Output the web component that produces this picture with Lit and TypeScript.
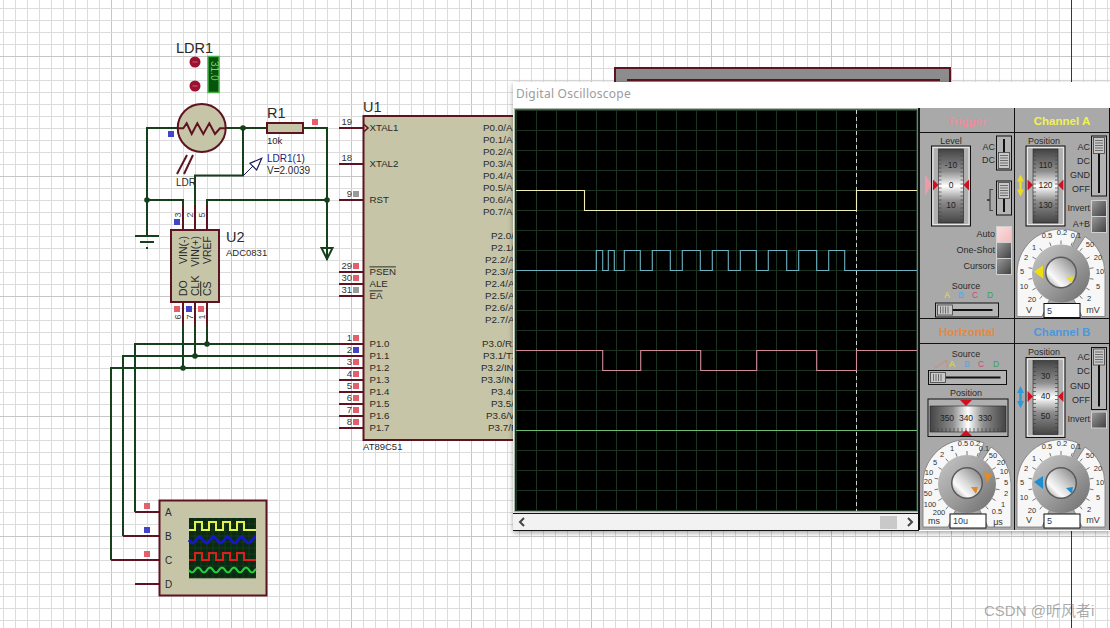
import { LitElement, html, svg, css } from "lit";
import { customElement } from "lit/decorators.js";

const WIRE = "#16401c";
const PIN = "#5e1420";
const BODY = "#c6c5a7";
const RED_SQ = "#e0606c";
const BLUE_SQ = "#4444c8";
const GRAY_SQ = "#9a9a9a";
const INK = "#2a2a2a";

type Anchor = "start" | "middle" | "end";

const t = (x: number, y: number, s: string, size = 10, anchor: Anchor = "start", fill = INK) =>
  svg`<text x=${x} y=${y} dy=".35em" font-size=${size} text-anchor=${anchor} fill=${fill}>${s}</text>`;

const rt = (x: number, y: number, s: string, size = 10.5, anchor: Anchor = "start", fill = INK) =>
  svg`<text transform="translate(${x} ${y}) rotate(-90)" dy=".35em" font-size=${size} text-anchor=${anchor} fill=${fill}>${s}</text>`;

const ln = (x1: number, y1: number, x2: number, y2: number, c = WIRE, w = 2) =>
  svg`<line x1=${x1} y1=${y1} x2=${x2} y2=${y2} stroke=${c} stroke-width=${w} />`;

const sq = (x: number, y: number, c = RED_SQ) =>
  svg`<rect x=${x - 3} y=${y - 3} width="6" height="6" fill=${c} />`;

const node = (x: number, y: number) => svg`<circle cx=${x} cy=${y} r="2.8" fill=${WIRE} />`;

function digital(xs: number[], y0: number, y1: number, start: number, end: number) {
  const pts: string[] = [`${start},${y0}`];
  let cur = y0;
  for (const x of xs) {
    pts.push(`${x},${cur}`);
    cur = cur === y0 ? y1 : y0;
    pts.push(`${x},${cur}`);
  }
  pts.push(`${end},${cur}`);
  return pts.join(" ");
}

function sine(x0: number, x1: number, y: number, amp: number, period: number) {
  const p: string[] = [];
  for (let x = x0; x <= x1; x += 1) p.push(`${x},${(y + amp * Math.sin(((x - x0) / period) * 2 * Math.PI)).toFixed(1)}`);
  return p.join(" ");
}

const range = (a: number, b: number, s: number) => {
  const r: number[] = [];
  for (let v = a; v <= b; v += s) r.push(v);
  return r;
};

/* ---------- oscilloscope control pieces (coordinates = page pixels, via viewBox) ---------- */

function vWheel(x: number, y: number, vals: string[]) {
  const cy = y + 39;
  return svg`
    <rect x=${x} y=${y} width="39" height="80" fill="#b0b0b0" stroke="#111" stroke-width="1" />
    <rect x=${x + 1.5} y=${y + 1.5} width="36" height="77" fill="none" stroke="#e8e8e8" stroke-width="1.2" />
    <rect x=${x + 7} y=${y + 3} width="25" height="74" fill="url(#wheelV)" stroke="#222" stroke-width=".6" />
    ${range(y + 6, y + 74, 4).map((ty) => ln(x + 7, ty, x + 10, ty, "#444", 0.7))}
    ${range(y + 6, y + 74, 4).map((ty) => ln(x + 29, ty, x + 32, ty, "#444", 0.7))}
    ${t(x + 19.5, cy - 20, vals[0], 8.5, "middle", "#222")}
    ${t(x + 19.5, cy, vals[1], 8.5, "middle", "#222")}
    ${t(x + 19.5, cy + 20, vals[2], 8.5, "middle", "#222")}
    <polygon points="${x + 1.5},${cy - 5.5} ${x + 7},${cy} ${x + 1.5},${cy + 5.5}" fill="#d01020" />
    <polygon points="${x + 37.5},${cy - 5.5} ${x + 32},${cy} ${x + 37.5},${cy + 5.5}" fill="#d01020" />`;
}

function vSlider(x: number, y: number, h: number, thumbY: number) {
  return svg`
    <rect x=${x} y=${y} width="15" height=${h} fill="#b4b4b4" stroke="#111" />
    <rect x=${x + 6.5} y=${y + 3} width="2" height=${h - 6} fill="#111" />
    <rect x=${x + 2} y=${thumbY} width="11" height="16" fill="#c8c8c8" stroke="#444" stroke-width=".8" />
    ${range(thumbY + 3, thumbY + 13, 2.5).map((ty) => ln(x + 3.5, ty, x + 11.5, ty, "#555", 0.8))}`;
}

function hSlider(x: number, y: number, w: number) {
  return svg`
    <rect x=${x} y=${y} width=${w} height="14" fill="#b4b4b4" stroke="#111" />
    <rect x=${x + 16} y=${y + 6} width=${w - 22} height="2" fill="#111" />
    <rect x=${x + 2} y=${y + 2} width="15" height="10" fill="#c8c8c8" stroke="#444" stroke-width=".8" />
    ${range(x + 5, x + 14, 2.5).map((tx) => ln(tx, y + 3.5, tx, y + 10.5, "#555", 0.8))}`;
}

function btn(x: number, y: number, pink = false) {
  return svg`
    <rect x=${x} y=${y} width="15" height="16" fill=${pink ? "url(#btnPink)" : "url(#btnDark)"} stroke="#d0d0d0" stroke-width="1" />`;
}

function dblArrow(x: number, y: number, c: string) {
  return svg`
    <polygon points="${x},${y} ${x + 3.5},${y + 7} ${x + 1.2},${y + 7} ${x + 1.2},${y + 15} ${x + 3.5},${y + 15} ${x},${y + 22} ${x - 3.5},${y + 15} ${x - 1.2},${y + 15} ${x - 1.2},${y + 7} ${x - 3.5},${y + 7}" fill=${c} />`;
}

type Lbl = [number, number, string];

function knob(cx: number, cy: number, labels: Lbl[], value: string, color: string, big: string, small: string) {
  const ticks = range(130, 410, 20).map((a) => {
    const r = (a * Math.PI) / 180;
    return ln(cx + 29 * Math.cos(r), cy + 29 * Math.sin(r), cx + 33 * Math.cos(r), cy + 33 * Math.sin(r), "#555", 0.8);
  });
  return svg`
    <path d="M${cx - 44} ${cy + 43} L${cx - 44} ${cy} A44 44 0 0 1 ${cx + 17} ${cy - 41} L${cx} ${cy} L${cx - 19} ${cy + 43} Z" fill="#f7f7f7" stroke="#777" stroke-width=".8" />
    <path d="M${cx + 24} ${cy - 37} A44 44 0 0 1 ${cx + 44} ${cy} L${cx + 44} ${cy + 43} L${cx + 21} ${cy + 43} L${cx} ${cy} Z" fill="#f7f7f7" stroke="#777" stroke-width=".8" />
    ${ticks}
    ${labels.map(([dx, dy, s]) => t(cx + dx, cy + dy, s, s === "V" || s === "mV" || s === "ms" || s === "μs" ? 9 : 7.5, "middle", "#333"))}
    <circle cx=${cx} cy=${cy} r="29" fill="url(#knobDisc)" />
    <circle cx=${cx} cy=${cy - 1} r="16" fill="#5a5a5a" />
    <circle cx=${cx} cy=${cy - 1} r="14.5" fill="url(#knobCap)" />
    <polygon points=${big} fill=${color} transform="translate(${cx} ${cy})" />
    <polygon points=${small} fill=${color} transform="translate(${cx} ${cy})" />
    <rect x=${cx - 17} y=${cy + 30} width="36" height="14" fill="#fff" stroke="#111" />
    ${t(cx - 14, cy + 37, value, 9, "start", "#2a3a60")}`;
}

const VOLT_LABELS: Lbl[] = [
  [-29, 26, "20"], [-37, 13, "10"], [-39, -2, "5"], [-35, -16, "2"], [-27, -26, "1"],
  [-14, -38, "0.5"], [1, -41, "0.2"], [15, -38, "0.1"], [29, -29, "50"], [37, -16, "20"],
  [39, -2, "10"], [37, 13, "5"], [28, 25, "2"], [-32, 36, "V"], [32, 36, "mV"],
];

const TIME_LABELS: Lbl[] = [
  [-25, -30, "2"], [-32, -22, "5"], [-38, -12, "10"], [-39, -3, "20"], [-39, 9, "50"],
  [-37, 20, "100"], [-28, 28, "200"], [-33, 37, "ms"], [-15, -36, "1"], [-4, -41, "0.5"],
  [8, -41, "0.2"], [17, -36, "0.1"], [26, -29, "50"], [34, -22, "20"], [37, -13, "10"],
  [39, -2, "5"], [39, 9, "2"], [36, 20, "1"], [30, 27, "0.5"], [31, 38, "μs"],
];

const BIG_V = "-27,-2 -18,-8 -18,5";
const SMALL_V = "5,4 12,3 11,10";

@customElement("app-root")
export class AppRoot extends LitElement {
  static styles = css`
    :host {
      display: block;
      position: relative;
      width: 1110px;
      height: 628px;
      overflow: hidden;
      background: #fff;
      font-family: "Liberation Sans", Arial, sans-serif;
    }
    .sheet {
      display: block;
      width: 1110px;
      height: 628px;
    }
    .window {
      position: absolute;
      left: 513px;
      top: 82px;
      width: 597px;
      height: 449px;
      display: flex;
      flex-direction: column;
      background: #fff;
      box-shadow: 0 2px 5px rgba(0, 0, 0, 0.35);
    }
    .titlebar {
      height: 26px;
      flex: none;
      box-sizing: border-box;
      display: flex;
      align-items: center;
      padding: 0 0 3px 3px;
      font: 12px "Noto Sans", sans-serif;
      letter-spacing: 0.25px;
      color: #9c9c9c;
    }
    .body {
      flex: 1;
      display: flex;
      min-height: 0;
    }
    .scope {
      width: 406px;
      flex: none;
      display: flex;
      flex-direction: column;
      background: #f4f4f4;
    }
    .screen {
      display: block;
      width: 406px;
      height: 405px;
      flex: none;
    }
    .scroll {
      flex: 1;
      display: flex;
      align-items: center;
      justify-content: space-between;
      padding: 0 3px 0 4px;
      border-top: 1px solid #111;
      border-bottom: 1px solid #111;
      border-right: 1px solid #111;
      background: #f2f2f2;
    }
    .track {
      flex: 1;
      display: flex;
      justify-content: flex-end;
      padding-right: 8px;
    }
    .thumb {
      width: 17px;
      height: 13px;
      background: #c9c9c9;
    }
    .chev {
      display: block;
      width: 10px;
      height: 10px;
    }
    .controls {
      flex: 1;
      display: grid;
      grid-template-columns: 94px 94px;
      grid-template-rows: 210px 211px;
      gap: 1px;
      padding-left: 1px;
      background: #111;
      height: 422px;
    }
    .panel {
      display: flex;
      flex-direction: column;
      background: #a9a9a9;
      min-height: 0;
    }
    .head {
      height: 25px;
      flex: none;
      box-sizing: border-box;
      padding-top: 1px;
      display: flex;
      align-items: center;
      justify-content: center;
      font-size: 11.5px;
      font-weight: 700;
      border-bottom: 1px solid #111;
    }
    .trig { color: #ea8e9c; }
    .cha { color: #f2f250; }
    .hor { color: #e08a44; }
    .chb { color: #4a98de; }
    .panel svg {
      display: block;
      width: 94px;
      flex: 1;
      min-height: 0;
    }
    svg text {
      font-family: "Liberation Sans", Arial, sans-serif;
    }
    .mark {
      position: absolute;
      left: 984px;
      top: 599px;
      font: 15px "Liberation Sans", "Noto Sans CJK SC", sans-serif;
      color: rgba(110, 110, 110, 0.58);
      white-space: nowrap;
    }
  `;

  private sheet() {
    const left: [number, number, string, string | null, string][] = [
      [128, 19, "XTAL1", null, ""],
      [164, 18, "XTAL2", null, ""],
      [200, 9, "RST", GRAY_SQ, ""],
      [272, 29, "PSEN", RED_SQ, "over"],
      [284, 30, "ALE", RED_SQ, ""],
      [296, 31, "EA", GRAY_SQ, "over"],
      [344, 1, "P1.0", RED_SQ, ""],
      [356, 2, "P1.1", BLUE_SQ, ""],
      [368, 3, "P1.2", RED_SQ, ""],
      [380, 4, "P1.3", RED_SQ, ""],
      [392, 5, "P1.4", RED_SQ, ""],
      [404, 6, "P1.5", RED_SQ, ""],
      [416, 7, "P1.6", RED_SQ, ""],
      [428, 8, "P1.7", RED_SQ, ""],
    ];
    const right: [number, number, string][] = [
      [128, 483, "P0.0/AD0"], [140, 483, "P0.1/AD1"], [152, 483, "P0.2/AD2"], [164, 483, "P0.3/AD3"],
      [176, 483, "P0.4/AD4"], [188, 483, "P0.5/AD5"], [200, 483, "P0.6/AD6"], [212, 483, "P0.7/AD7"],
      [236, 491, "P2.0/A8"], [248, 491, "P2.1/A9"], [260, 485, "P2.2/A10"], [272, 485, "P2.3/A11"],
      [284, 485, "P2.4/A12"], [296, 485, "P2.5/A13"], [308, 485, "P2.6/A14"], [320, 485, "P2.7/A15"],
      [344, 482, "P3.0/RXD"], [356, 483, "P3.1/TXD"], [368, 481, "P3.2/INT0"], [380, 481, "P3.3/INT1"],
      [392, 491, "P3.4/T0"], [404, 491, "P3.5/T1"], [416, 486, "P3.6/WR"], [428, 488, "P3.7/RD"],
    ];
    const xs = range(3, 1107, 12);
    const ys = range(8, 620, 12);
    return html`
      <svg class="sheet" viewBox="0 0 1110 628" xmlns="http://www.w3.org/2000/svg">
        <defs>
          <linearGradient id="wheelV" x1="0" y1="0" x2="0" y2="1">
            <stop offset="0" stop-color="#444" />
            <stop offset=".3" stop-color="#8e8e8e" />
            <stop offset=".5" stop-color="#ffffff" />
            <stop offset=".7" stop-color="#8e8e8e" />
            <stop offset="1" stop-color="#444" />
          </linearGradient>
          <linearGradient id="wheelH" x1="0" y1="0" x2="1" y2="0">
            <stop offset="0" stop-color="#444" />
            <stop offset=".3" stop-color="#8e8e8e" />
            <stop offset=".5" stop-color="#ffffff" />
            <stop offset=".7" stop-color="#8e8e8e" />
            <stop offset="1" stop-color="#444" />
          </linearGradient>
          <linearGradient id="knobDisc" x1="0" y1="0" x2="1" y2="1">
            <stop offset="0" stop-color="#c8c8c8" />
            <stop offset=".55" stop-color="#9a9a9a" />
            <stop offset="1" stop-color="#6a6a6a" />
          </linearGradient>
          <linearGradient id="knobCap" x1="1" y1="0" x2="0" y2="1">
            <stop offset="0" stop-color="#7c7c7c" />
            <stop offset=".5" stop-color="#d8d8d8" />
            <stop offset=".72" stop-color="#fafafa" />
            <stop offset="1" stop-color="#8a8a8a" />
          </linearGradient>
          <linearGradient id="btnDark" x1="0" y1="0" x2="1" y2="1">
            <stop offset="0" stop-color="#9c9c9c" />
            <stop offset="1" stop-color="#3e3e3e" />
          </linearGradient>
          <linearGradient id="btnPink" x1="0" y1="0" x2="1" y2="1">
            <stop offset="0" stop-color="#fbdede" />
            <stop offset="1" stop-color="#f3bcbc" />
          </linearGradient>
        </defs>

        ${xs.map((x) => ln(x + 0.5, 0, x + 0.5, 628, (x - 111) % 120 === 0 ? "#c6c6c6" : "#dcdcdc", 1))}
        ${ys.map((y) => ln(0, y + 0.5, 1110, y + 0.5, (y - 56) % 120 === 0 ? "#c6c6c6" : "#dcdcdc", 1))}
        ${ln(1071.5, 0, 1071.5, 628, "#2a2a9a", 1)}

        <!-- part hidden behind the window -->
        <rect x="615" y="68" width="335" height="30" fill="#8c8c8c" stroke=${PIN} stroke-width="2" />
        ${ln(627, 80, 940, 80, PIN, 2)}

        <!-- wires -->
        ${ln(147, 128, 178, 128)} ${ln(225, 128, 267, 128)} ${ln(303, 128, 327, 128)}
        ${ln(147, 127, 147, 236)} ${ln(327, 127, 327, 260)}
        ${ln(147, 200, 183, 200)} ${ln(207, 200, 327, 200)}
        ${ln(183, 199, 183, 230, PIN)} ${ln(207, 199, 207, 230, PIN)} ${ln(195, 175, 195, 230, PIN)}
        ${ln(183, 199, 183, 206)} ${ln(207, 199, 207, 206)} ${ln(195, 175, 195, 206)}
        ${ln(194, 175.5, 244, 175.5)} ${ln(243, 128, 243, 176)}
        ${node(243, 128)} ${node(147, 200)} ${node(327, 200)}

        ${ln(183, 302, 183, 368, PIN)} ${ln(195, 302, 195, 356, PIN)} ${ln(207, 302, 207, 344, PIN)}
        ${ln(183, 326, 183, 368)} ${ln(195, 326, 195, 356)} ${ln(207, 326, 207, 344)}
        ${ln(135, 344, 340, 344)} ${ln(123, 356, 340, 356)} ${ln(111, 368, 340, 368)}
        ${ln(135, 343, 135, 512)} ${ln(123, 355, 123, 536)} ${ln(111, 367, 111, 560)}
        ${node(207, 344)} ${node(195, 356)} ${node(183, 368)}

        <!-- ground and power arrow -->
        ${ln(135, 236, 159, 236)} ${ln(140, 242, 154, 242)} ${ln(146, 248, 148, 248)}
        <polygon points="321.5,248 332.5,248 327,259" fill="none" stroke=${WIRE} stroke-width="2" />

        <!-- LDR1 -->
        ${t(176, 48, "LDR1", 14.5)}
        <circle cx="195" cy="62" r="5.5" fill="#9c1030" />
        <circle cx="195" cy="86" r="5.5" fill="#9c1030" />
        ${ln(192.5, 62, 197.5, 62, "#d06070", 1)} ${ln(192.5, 86, 197.5, 86, "#d06070", 1)}
        <rect x="208" y="56.5" width="11" height="36" fill="#07540c" stroke="#44b048" stroke-width="1.5" />
        <text transform="translate(210 61) rotate(90)" font-size="10" fill="#74d46c" dy="-1">31.0</text>
        <circle cx="201.7" cy="128" r="24" fill=${BODY} stroke=${PIN} stroke-width="2" />
        <polyline points="177.7,128.3 183.3,128.3 186.7,123.3 191.7,134 197.3,123.3 203.3,134 209.3,123.3 215,134 220,128.3 226,128.3" fill="none" stroke=${PIN} stroke-width="2" />
        ${ln(177, 174, 187, 155, PIN, 2)} ${ln(184, 174, 193, 155, PIN, 2)}
        ${sq(171, 134, BLUE_SQ)}
        ${t(176, 182, "LDR", 10)}

        <!-- R1 -->
        ${t(267, 113, "R1", 14.5)}
        <rect x="267" y="123" width="36" height="10" fill=${BODY} stroke=${PIN} stroke-width="2" />
        ${sq(315, 122)}
        ${t(267, 141, "10k", 9.5)}

        <!-- voltage probe -->
        ${ln(243, 176, 254, 165, "#1c1c5c", 1)}
        <polygon points="261.7,158.3 250,163.3 256.7,170" fill="#fff" stroke="#1c1c5c" stroke-width="1.2" />
        ${t(267, 158, "LDR1(1)", 10, "start", "#23237a")}
        ${t(267, 170, "V=2.0039", 10)}

        <!-- U2 -->
        <rect x="171" y="230" width="48" height="72" fill=${BODY} stroke=${PIN} stroke-width="2" />
        ${rt(183.5, 236, "VIN(-)", 10.5, "end")} ${rt(195.5, 236, "VIN(+)", 10.5, "end")} ${rt(207.5, 236, "VREF", 10.5, "end")}
        ${rt(183.5, 296, "DO")} ${rt(195.5, 296, "CLK")}
        <text transform="translate(207.5 296) rotate(-90)" dy=".35em" font-size="10.5" fill=${INK} text-decoration="overline">CS</text>
        ${t(226, 237, "U2", 14.5)} ${t(226, 253, "ADC0831", 9.5)}
        ${rt(178, 215, "3", 9, "middle", "#444")} ${rt(190, 215, "2", 9, "middle", "#444")} ${rt(202, 215, "5", 9, "middle", "#444")}
        ${sq(177, 222, BLUE_SQ)}
        ${sq(177, 309)} ${sq(189, 309, BLUE_SQ)} ${sq(201, 309)}
        ${rt(178, 317, "6", 9, "middle", "#444")} ${rt(190, 317, "7", 9, "middle", "#444")} ${rt(202, 317, "1", 9, "middle", "#444")}

        <!-- U1 -->
        ${t(363, 107, "U1", 14.5)}
        ${left.map(([y, n, , c]) => svg`
          ${ln(339, y, 363, y, PIN)}
          ${t(352, y - 6.5, String(n), 9.5, "end", "#333")}
          ${c ? sq(356, y - 6, c) : null}`)}
        <rect x="363.5" y="116" width="170" height="324" fill=${BODY} stroke=${PIN} stroke-width="2" />
        <polyline points="363.5,124 368,128 363.5,132" fill="none" stroke=${PIN} stroke-width="1.6" />
        ${left.map(([y, , s, , o]) =>
          o
            ? svg`<text x="369.5" y=${y} dy=".35em" font-size="9.7" fill=${INK} text-decoration="overline">${s}</text>`
            : t(369.5, y, s, 9.7))}
        ${right.map(([y, x, s]) => t(x, y, s, 9.8))}
        ${t(363, 447, "AT89C51", 9.5)}

        <!-- logic analyser symbol -->
        <rect x="159.5" y="500.5" width="107" height="95" fill=${BODY} stroke=${PIN} stroke-width="2" />
        ${ln(135, 512, 159, 512, PIN)} ${ln(123, 536, 159, 536, PIN)} ${ln(111, 560, 159, 560, PIN)} ${ln(135, 584, 159, 584, PIN)}
        ${sq(147, 506)} ${sq(147, 530, BLUE_SQ)} ${sq(147, 554)}
        ${t(165, 512, "A", 10)} ${t(165, 536, "B", 10)} ${t(165, 560, "C", 10)} ${t(165, 584, "D", 10)}
        <rect x="189" y="518" width="67" height="60" fill="#0a2a12" />
        ${range(195, 255, 6).map((x) => ln(x, 518, x, 578, "#1a4222", 0.7))}
        ${range(524, 578, 6).map((y) => ln(189, y, 256, y, "#1a4222", 0.7))}
        <polyline points=${digital(range(195, 250, 7), 530, 522, 189, 256)} fill="none" stroke="#e4f04c" stroke-width="2" />
        <polyline points=${sine(189, 256, 540, 3, 14)} fill="none" stroke="#1818c0" stroke-width="3" />
        <polyline points=${digital(range(195, 250, 7), 560, 553, 189, 256)} fill="none" stroke="#d82020" stroke-width="2" />
        <polyline points=${sine(189, 256, 570, 2.5, 12)} fill="none" stroke="#28d040" stroke-width="2" />
      </svg>`;
  }

  private screen() {
    const cyan = [596.3, 602.7, 608.3, 614.3, 624.3, 640.3, 652.3, 670.3, 682.3, 700.3, 712.3, 728.3, 740.3, 756.3, 768.3, 786.7, 798.7, 816.7, 828.7, 844.7];
    const pink = [602.7, 640.7, 700.7, 756.7, 816.7, 856.5];
    return svg`
      <svg class="screen" viewBox="513 108 406 405" xmlns="http://www.w3.org/2000/svg">
        <rect x="513" y="108" width="406" height="405" fill="#fff" />
        <rect x="514.5" y="108.8" width="403.5" height="403" fill="#000" stroke="#aab5aa" stroke-width="1.4" />
        <line x1="918.5" y1="108" x2="918.5" y2="513" stroke="#111" stroke-width="1" />
        ${range(516.5, 917, 20).map((x) => ln(x, 110, x, 511, "#1d3424", 1))}
        ${range(110.5, 511, 20).map((y) => ln(515, y, 917, y, "#1d3424", 1))}
        <line x1="856.5" y1="110" x2="856.5" y2="511" stroke="#cfcfcf" stroke-width="1" stroke-dasharray="4 3" />
        <polyline points=${digital([584.5, 856.5], 190.5, 210.5, 516, 917)} fill="none" stroke="#f0eeb4" stroke-width="1.1" />
        <polyline points=${digital(cyan, 270.5, 250.5, 516, 917)} fill="none" stroke="#6db2c0" stroke-width="1.1" />
        <polyline points=${digital(pink, 350.5, 370.5, 516, 917)} fill="none" stroke="#d38a98" stroke-width="1.1" />
        ${ln(516, 430.5, 917, 430.5, "#6fbf72", 1.1)}
      </svg>`;
  }

  private trigger() {
    return svg`
      <svg viewBox="920 134 94 184" xmlns="http://www.w3.org/2000/svg">
        ${t(951, 141, "Level", 9, "middle")}
        <polygon points="925,175 932,185 925,196" fill="#ee9aa8" />
        ${vWheel(931.5, 146.5, ["-10", "0", "10"])}
        ${t(995, 147, "AC", 9, "end")} ${t(995, 160, "DC", 9, "end")}
        ${vSlider(996.5, 136.5, 34, 153)}
        ${vSlider(996.5, 181.5, 34, 183)}
        <polyline points="993,190 990,190 990,200 987,200" fill="none" stroke="#444" stroke-width="1.2" />
        <polyline points="987,201 990,201 990,211 993,211" fill="none" stroke="#444" stroke-width="1.2" />
        ${t(995, 234, "Auto", 9, "end")} ${t(995, 250, "One-Shot", 9, "end")} ${t(995, 266, "Cursors", 9, "end")}
        ${btn(996.5, 227, true)} ${btn(996.5, 243)} ${btn(996.5, 259)}
        ${t(966, 286, "Source", 9, "middle")}
        ${t(947, 296, "A", 8.5, "middle", "#e4e040")} ${t(961, 296, "B", 8.5, "middle", "#50a8e0")}
        ${t(975, 296, "C", 8.5, "middle", "#d04878")} ${t(990, 296, "D", 8.5, "middle", "#3ca058")}
        ${hSlider(935.5, 303.5, 63)}
      </svg>`;
  }

  private channelA() {
    return svg`
      <svg viewBox="1015 134 94 184" xmlns="http://www.w3.org/2000/svg">
        ${t(1044, 141, "Position", 9, "middle")}
        ${dblArrow(1020.5, 175, "#ecdc20")}
        ${vWheel(1026, 146.5, ["110", "120", "130"])}
        ${t(1090, 147, "AC", 9, "end")} ${t(1090, 161, "DC", 9, "end")}
        ${t(1090, 175, "GND", 9, "end")} ${t(1090, 189, "OFF", 9, "end")}
        ${vSlider(1091.5, 136.5, 60, 138)}
        ${t(1090, 208, "Invert", 9, "end")} ${t(1090, 224, "A+B", 9, "end")}
        ${btn(1091.5, 201)} ${btn(1091.5, 217)}
        ${knob(1061, 274, VOLT_LABELS, "5", "#eedd10", BIG_V, SMALL_V)}
      </svg>`;
  }

  private horizontal() {
    return svg`
      <svg viewBox="920 346 94 184" xmlns="http://www.w3.org/2000/svg">
        ${t(966, 355, "Source", 9, "middle")}
        <polyline points="935,369 947,361 947,369 Z" fill="none" stroke="#d08878" stroke-width="1" />
        ${t(952, 365, "A", 8.5, "middle", "#e4e040")} ${t(967, 365, "B", 8.5, "middle", "#50a8e0")}
        ${t(981, 365, "C", 8.5, "middle", "#d04878")} ${t(996, 365, "D", 8.5, "middle", "#3ca058")}
        ${hSlider(928.5, 371.5, 78)}
        ${t(966, 394, "Position", 9, "middle")}
        <rect x="928" y="400" width="80" height="37.5" fill="#b0b0b0" stroke="#111" />
        <rect x="930" y="407" width="76" height="26" fill="url(#wheelH)" stroke="#222" stroke-width=".6" />
        ${range(934, 1003, 4).map((x) => ln(x, 429, x, 433, "#444", 0.7))}
        ${t(947, 419, "350", 8.5, "middle", "#222")} ${t(966, 419, "340", 8.5, "middle", "#222")} ${t(985, 419, "330", 8.5, "middle", "#222")}
        <polygon points="960,401 972,401 966,407" fill="#d01020" />
        <polygon points="960,437 972,437 966,431" fill="#d01020" />
        ${knob(967, 485, TIME_LABELS, "10u", "#e08a28", "17,-12 25,-10 20,-1", "4,3 11,3 9,10")}
      </svg>`;
  }

  private channelB() {
    return svg`
      <svg viewBox="1015 346 94 184" xmlns="http://www.w3.org/2000/svg">
        ${t(1044, 353, "Position", 9, "middle")}
        ${dblArrow(1020.5, 387, "#2f9ad8")}
        ${vWheel(1026, 358.5, ["30", "40", "50"])}
        ${t(1090, 358, "AC", 9, "end")} ${t(1090, 372, "DC", 9, "end")}
        ${t(1090, 387, "GND", 9, "end")} ${t(1090, 401, "OFF", 9, "end")}
        ${vSlider(1091.5, 348.5, 62, 350)}
        ${t(1090, 420, "Invert", 9, "end")}
        ${btn(1091.5, 413)}
        ${knob(1061, 485, VOLT_LABELS, "5", "#1f8ed0", BIG_V, SMALL_V)}
      </svg>`;
  }

  render() {
    return html`
      ${this.sheet()}
      <section class="window">
        <div class="titlebar">Digital Oscilloscope</div>
        <div class="body">
          <div class="scope">
            ${this.screen()}
            <div class="scroll">
              <svg class="chev" viewBox="0 0 10 10"><polyline points="7,1 3,5 7,9" fill="none" stroke="#444" stroke-width="2" /></svg>
              <div class="track"><div class="thumb"></div></div>
              <svg class="chev" viewBox="0 0 10 10"><polyline points="3,1 7,5 3,9" fill="none" stroke="#444" stroke-width="2" /></svg>
            </div>
          </div>
          <div class="controls">
            <div class="panel"><div class="head trig">Trigger</div>${this.trigger()}</div>
            <div class="panel"><div class="head cha">Channel A</div>${this.channelA()}</div>
            <div class="panel"><div class="head hor">Horizontal</div>${this.horizontal()}</div>
            <div class="panel"><div class="head chb">Channel B</div>${this.channelB()}</div>
          </div>
        </div>
      </section>
      <div class="mark">CSDN @听风者i</div>
    `;
  }
}
